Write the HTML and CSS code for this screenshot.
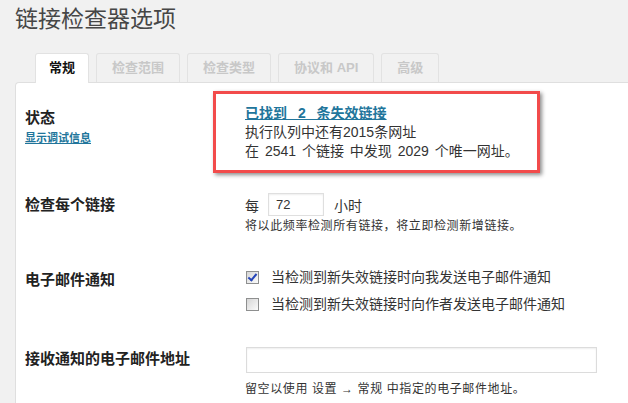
FILE: index.html
```html
<!doctype html>
<html lang="zh-cn">
<head>
  <meta charset="UTF-8">
  <title>链接检查器选项</title>
  <link rel="stylesheet" href="styles.css">
</head>
<body>
  <h2 class="page-title">链接检查器选项</h2>
  <ul class="tabs">
    <li class="tab active">常规</li>
    <li class="tab">检查范围</li>
    <li class="tab">检查类型</li>
    <li class="tab">协议和 API</li>
    <li class="tab">高级</li>
  </ul>
  <div class="panel">
    <div class="row row-status">
      <div class="label">
        <div class="label-text">状态</div>
        <a href="#" class="debug-link">显示调试信息</a>
      </div>
      <div class="field">
        <div class="status-box">
          <a href="#" class="broken-link">已找到 2 条失效链接</a>
          <div>执行队列中还有2015条网址</div>
          <div>在 2541 个链接 中发现 2029 个唯一网址。</div>
        </div>
      </div>
    </div>

    <div class="row row-interval">
      <div class="label"><div class="label-text">检查每个链接</div></div>
      <div class="field">
        <div class="inline">
          <span>每</span>
          <input type="text" class="num-input" value="72">
          <span>小时</span>
        </div>
        <p class="hint">将以此频率检测所有链接，将立即检测新增链接。</p>
      </div>
    </div>

    <div class="row row-notify">
      <div class="label"><div class="label-text">电子邮件通知</div></div>
      <div class="field checks">
        <label class="check-line"><input type="checkbox" class="chk" checked>当检测到新失效链接时向我发送电子邮件通知</label>
        <label class="check-line"><input type="checkbox" class="chk">当检测到新失效链接时向作者发送电子邮件通知</label>
      </div>
    </div>

    <div class="row row-email">
      <div class="label"><div class="label-text">接收通知的电子邮件地址</div></div>
      <div class="field">
        <input type="text" class="email-input">
        <p class="hint">留空以使用 设置 → 常规 中指定的电子邮件地址。</p>
      </div>
    </div>
  </div>
</body>
</html>
```

FILE: styles.css
```css
html {
  overflow: hidden;
}

body {
  margin: 0;
  background: #f1f1f1;
  color: #333;
  font-family: "Liberation Sans", "Noto Sans CJK SC", sans-serif;
  font-size: 14px;
}

.page-title {
  margin: 0;
  padding: 4px 0 0 15px;
  font-size: 23px;
  font-weight: normal;
  line-height: 30px;
  color: #464646;
}

/* 分頁標籤 */
.tabs {
  display: flex;
  gap: 7px;
  list-style: none;
  margin: 19px 0 0;
  padding: 0 0 0 35px;
}

.tab {
  box-sizing: border-box;
  height: 29px;
  padding: 0 15px;
  border: 1px solid #e2e2e2;
  border-bottom: 0;
  border-radius: 3px 3px 0 0;
  background: #f1f1f1;
  color: #c8c8c8;
  font-size: 13px;
  font-weight: bold;
  line-height: 28px;
}

.tab.active {
  position: relative;
  z-index: 1;
  height: 30px;
  margin-bottom: -1px;
  padding: 0 13px;
  background: #fff;
  color: #111;
}

.panel {
  margin-left: 15px;
  padding: 8px 0 6px 9px;
  background: #fff;
  border: 1px solid #dfdfdf;
  border-right: 0;
  border-bottom: 0;
  border-radius: 4px 0 0 0;
}

.row {
  display: grid;
  grid-template-columns: 220px 1fr;
}

.label-text {
  font-size: 15px;
  font-weight: bold;
  line-height: 20px;
  color: #222;
}

.row-status .label {
  padding-top: 17px;
}

.debug-link {
  display: inline-block;
  margin-top: 3px;
  font-size: 11px;
  font-weight: bold;
  line-height: 14px;
  color: #21759b;
}

.status-box {
  box-sizing: border-box;
  width: 327px;
  margin-left: -32px;
  padding: 10px 0 9px 29px;
  border: 3px solid #f24b4b;
  box-shadow: 2px 2px 4px rgb(0 0 0 / 45%);
  line-height: 19px;
  word-spacing: 2px;
}

.broken-link {
  font-weight: bold;
  color: #21759b;
  word-spacing: 7px;
}

.row-interval {
  margin-top: 20px;
}

.row-interval .label {
  padding-top: 2px;
}

.inline {
  display: flex;
  align-items: center;
  gap: 9px;
  height: 23px;
}

.num-input {
  box-sizing: border-box;
  width: 56px;
  height: 23px;
  margin-right: 1px;
  padding: 0 7px;
  border: 1px solid #dfdfdf;
  box-shadow: inset 0 1px 2px rgb(0 0 0 / 7%);
  font-family: "Liberation Sans", sans-serif;
  font-size: 13px;
  color: #333;
}

.hint {
  margin: 2px 0 0;
  font-size: 12px;
  line-height: 16px;
  letter-spacing: 0.6px;
  color: #333;
}

.row-notify {
  margin-top: 33px;
}

.row-notify .label {
  padding-top: 3px;
}

.checks {
  display: flex;
  flex-direction: column;
  gap: 7px;
}

.check-line {
  display: flex;
  align-items: center;
  gap: 12px;
  line-height: 20px;
}

.chk {
  appearance: none;
  position: relative;
  box-sizing: border-box;
  width: 13px;
  height: 13px;
  margin: 0 0 0 1px;
  border: 1px solid #8e8f8f;
  background: linear-gradient(135deg, #d6d6d6, #fbfbfb);
}

.chk:checked::after {
  content: "";
  position: absolute;
  left: 3px;
  top: 0;
  width: 3px;
  height: 7px;
  border: solid #2444b8;
  border-width: 0 2px 2px 0;
  transform: rotate(40deg);
}

.row-email {
  margin-top: 33px;
}

.row-email .label {
  padding-top: 2px;
}

.email-input {
  display: block;
  box-sizing: border-box;
  width: 351px;
  height: 26px;
  margin-left: 1px;
  border: 1px solid #dcdcdc;
  box-shadow: inset 0 1px 2px rgb(0 0 0 / 7%);
}

.row-email .hint {
  margin-top: 8px;
}
```
